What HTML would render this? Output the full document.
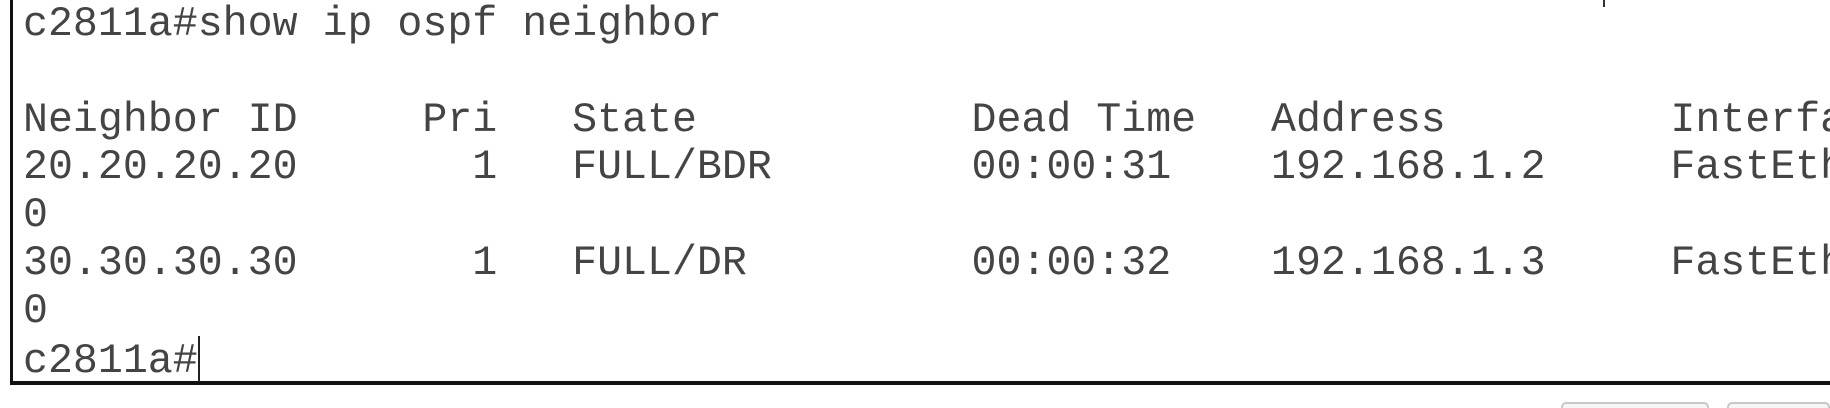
<!DOCTYPE html>
<html><head><meta charset="utf-8"><style>
html,body{margin:0;padding:0;background:#fff;width:1830px;height:408px;overflow:hidden;position:relative}
.box{position:absolute;left:10px;top:-5px;width:1820px;height:390px;border-left:3px solid #111;border-bottom:4px solid #111;box-sizing:border-box}
pre{position:absolute;left:23px;top:1px;width:1807px;overflow:hidden;margin:0;font-family:"Liberation Mono",monospace;font-size:41.6px;line-height:47.8px;color:#444;letter-spacing:0}
.cur{display:inline-block;width:2px;height:46px;background:#222;vertical-align:-10px}
.btn{position:absolute;top:402px;height:20px;border:2px solid #c8c8c8;border-bottom:none;border-radius:5px 5px 0 0;background:#f6f6f6;box-sizing:border-box}
.p{position:absolute;left:1603px;top:-3px;width:2px;height:10px;background:#333}
</style></head><body>
<div class="box"></div>
<div class="p"></div>
<pre>c2811a#show ip ospf neighbor

Neighbor ID     Pri   State           Dead Time   Address         Interfa
20.20.20.20       1   FULL/BDR        00:00:31    192.168.1.2     FastEth
0
30.30.30.30       1   FULL/DR         00:00:32    192.168.1.3     FastEth
0
c2811a#<span class="cur"></span></pre>
<div class="btn" style="left:1561px;width:148px"></div>
<div class="btn" style="left:1727px;width:103px"></div>
</body></html>
